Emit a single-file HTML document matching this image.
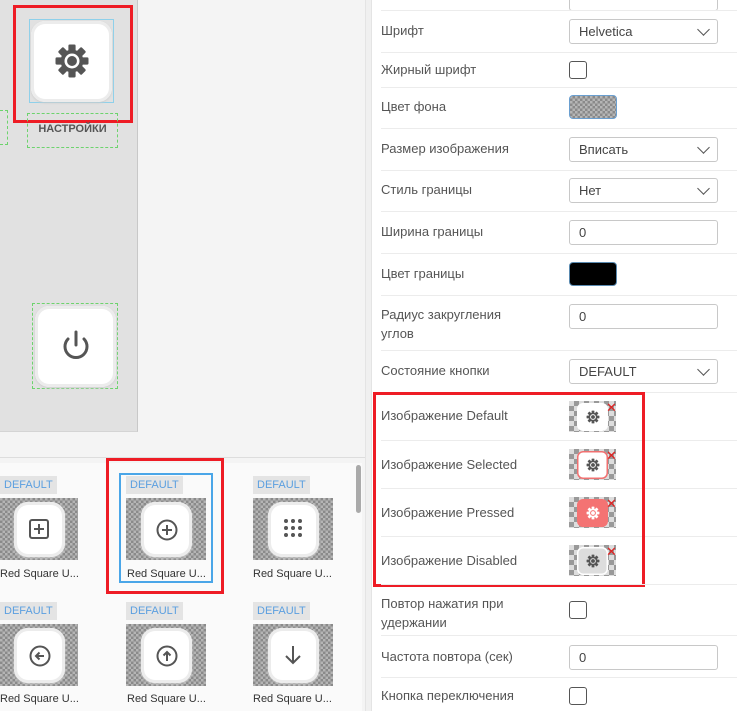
<!DOCTYPE html>
<html><head><meta charset="utf-8">
<style>
*{box-sizing:border-box;margin:0;padding:0}
body{width:737px;height:711px;overflow:hidden;position:relative;background:#f4f4f4;font-family:"Liberation Sans","DejaVu Sans",sans-serif;color:#555}
.a{position:absolute}
.chk{background:repeating-conic-gradient(#8a8a8a 0 25%,#b5b5b5 0 50%) 0 0/5px 5px}
.chk2{background:repeating-conic-gradient(#999 0 25%,#ddd 0 50%) 0 0/10px 10px}
.btn{position:absolute;background:#fff;border-radius:14px;box-shadow:inset 0 0 0 3px #ececec,0 1px 2px #ccc}
.lbl{position:absolute;left:381px;font-size:13px;color:#555;line-height:19px}
.inp{position:absolute;left:569px;width:149px;height:25px;border:1px solid #c8c8c8;border-radius:3px;background:#fff;font-size:13px;padding-left:9px;line-height:23px;color:#444}
.sel::after{content:"";position:absolute;right:9px;top:5px;width:8px;height:8px;border-right:1.5px solid #555;border-bottom:1.5px solid #555;transform:rotate(45deg)}
.cb{position:absolute;left:569px;width:18px;height:18px;border:1.5px solid #555;border-radius:3px;background:#fff}
.hr{position:absolute;left:381px;width:356px;height:1px;background:#ececec}
.tag{position:absolute;height:18px;background:#e4e4e4;color:#5b9fe0;font-size:11px;line-height:18px;padding:0 4px}
.cap{position:absolute;font-size:11px;color:#333;white-space:nowrap}
.thumb{position:absolute;left:569px;width:47px;height:31px}
.thumb i{position:absolute;left:8px;top:2px;width:31px;height:28px;border-radius:6px;background:#fff;display:flex;align-items:center;justify-content:center}
.x{position:absolute;left:606px;color:#e02020;font-size:13px;font-weight:bold;line-height:12px}
</style></head><body>
<svg width="0" height="0" style="position:absolute">
<defs>
<g id="gear">
<g fill="currentColor">
<rect x="9.6" y="1" width="4.8" height="5" rx="0.8"/>
<rect x="9.6" y="1" width="4.8" height="5" rx="0.8" transform="rotate(45 12 12)"/>
<rect x="9.6" y="1" width="4.8" height="5" rx="0.8" transform="rotate(90 12 12)"/>
<rect x="9.6" y="1" width="4.8" height="5" rx="0.8" transform="rotate(135 12 12)"/>
<rect x="9.6" y="1" width="4.8" height="5" rx="0.8" transform="rotate(180 12 12)"/>
<rect x="9.6" y="1" width="4.8" height="5" rx="0.8" transform="rotate(225 12 12)"/>
<rect x="9.6" y="1" width="4.8" height="5" rx="0.8" transform="rotate(270 12 12)"/>
<rect x="9.6" y="1" width="4.8" height="5" rx="0.8" transform="rotate(315 12 12)"/>
<circle cx="12" cy="12" r="7.6"/>
</g>
<circle cx="12" cy="12" r="5" fill="var(--bg,#fff)"/>
<circle cx="12" cy="12" r="3.3" fill="currentColor"/>
</g>
</defs></svg>
<!-- canvas -->
<div class="a" style="left:0;top:0;width:138px;height:432px;background:#e1e1e1;border-right:1px solid #c8c8c8;border-bottom:1px solid #d4d4d4"></div>
<div class="a" style="left:29px;top:19px;width:85px;height:84px;border:1px solid #8ed0ea"></div>
<div class="btn" style="left:31px;top:21px;width:81px;height:81px"></div>
<svg class="a" style="left:54px;top:43px;color:#555" width="36" height="36" viewBox="0 0 24 24"><use href="#gear"/></svg>
<div class="a" style="left:13px;top:5px;width:120px;height:118px;border:3px solid #ee1c25"></div>
<div class="a" style="left:27px;top:113px;width:91px;height:35px;border:1px dashed #6dd36d"></div>
<div class="a" style="left:-10px;top:110px;width:18px;height:35px;border:1px dashed #6dd36d"></div>
<div class="a" style="left:27px;top:123px;width:91px;text-align:center;font-size:11px;font-weight:bold;color:#555">НАСТРОЙКИ</div>
<div class="a" style="left:32px;top:303px;width:86px;height:86px;border:1px dashed #6dd36d"></div>
<div class="btn" style="left:35px;top:306px;width:81px;height:81px"></div>
<svg class="a" style="left:58px;top:328px" width="36" height="36" viewBox="0 0 36 36"><path d="M18 4v13M10 11a11 11 0 1 0 16 0" fill="none" stroke="#555" stroke-width="3" stroke-linecap="round"/></svg>
<div class="a" style="left:365px;top:0;width:7px;height:711px;background:#f0f0f0;border-left:1px solid #e4e4e4;border-right:1px solid #e4e4e4"></div>
<!-- bottom library -->
<div class="a" style="left:0;top:457px;width:365px;height:1px;background:#ddd"></div>
<div class="a" style="left:0;top:463px;width:362px;height:248px;background:#fafafa"></div>
<div class="a" style="left:356px;top:465px;width:5px;height:48px;background:#aaa;border-radius:3px"></div>

<div class="tag" style="left:0;top:476px">DEFAULT</div>
<div class="a chk" style="left:0;top:498px;width:78px;height:62px"></div>
<div class="btn" style="left:14px;top:502px;width:51px;height:55px"></div>
<svg class="a" style="left:28px;top:518px" width="22" height="22" viewBox="0 0 22 22"><rect x="2" y="2" width="18" height="18" rx="2" fill="none" stroke="#555" stroke-width="2"/><path d="M11 6v10M6 11h10" stroke="#555" stroke-width="2"/></svg>
<div class="cap" style="left:0;top:568px">Red Square U...</div>

<div class="tag" style="left:126px;top:476px">DEFAULT</div>
<div class="a chk" style="left:126px;top:498px;width:80px;height:62px"></div>
<div class="btn" style="left:141px;top:502px;width:51px;height:55px"></div>
<svg class="a" style="left:155px;top:518px" width="24" height="24" viewBox="0 0 24 24"><circle cx="12" cy="12" r="9.5" fill="none" stroke="#555" stroke-width="2"/><path d="M12 7v10M7 12h10" stroke="#555" stroke-width="2"/></svg>
<div class="cap" style="left:127px;top:568px">Red Square U...</div>
<div class="a" style="left:119px;top:473px;width:94px;height:110px;border:2px solid #4aa6e8"></div>
<div class="a" style="left:106px;top:458px;width:118px;height:136px;border:3px solid #ee1c25"></div>

<div class="tag" style="left:253px;top:476px">DEFAULT</div>
<div class="a chk" style="left:253px;top:498px;width:80px;height:62px"></div>
<div class="btn" style="left:268px;top:502px;width:51px;height:55px"></div>
<svg class="a" style="left:283px;top:518px" width="20" height="20" viewBox="0 0 20 20" fill="#555"><circle cx="3" cy="3" r="2"/><circle cx="10" cy="3" r="2"/><circle cx="17" cy="3" r="2"/><circle cx="3" cy="10" r="2"/><circle cx="10" cy="10" r="2"/><circle cx="17" cy="10" r="2"/><circle cx="3" cy="17" r="2"/><circle cx="10" cy="17" r="2"/><circle cx="17" cy="17" r="2"/></svg>
<div class="cap" style="left:253px;top:568px">Red Square U...</div>

<div class="tag" style="left:0;top:602px">DEFAULT</div>
<div class="a chk" style="left:0;top:624px;width:78px;height:62px"></div>
<div class="btn" style="left:14px;top:628px;width:51px;height:55px"></div>
<svg class="a" style="left:28px;top:644px" width="24" height="24" viewBox="0 0 24 24"><circle cx="12" cy="12" r="9.5" fill="none" stroke="#555" stroke-width="2"/><path d="M16 12H8M11.5 8.5L8 12l3.5 3.5" fill="none" stroke="#555" stroke-width="2"/></svg>
<div class="cap" style="left:0;top:693px">Red Square U...</div>

<div class="tag" style="left:126px;top:602px">DEFAULT</div>
<div class="a chk" style="left:126px;top:624px;width:80px;height:62px"></div>
<div class="btn" style="left:141px;top:628px;width:51px;height:55px"></div>
<svg class="a" style="left:155px;top:644px" width="24" height="24" viewBox="0 0 24 24"><circle cx="12" cy="12" r="9.5" fill="none" stroke="#555" stroke-width="2"/><path d="M12 17V8M8.5 11.5L12 8l3.5 3.5" fill="none" stroke="#555" stroke-width="2"/></svg>
<div class="cap" style="left:127px;top:693px">Red Square U...</div>

<div class="tag" style="left:253px;top:602px">DEFAULT</div>
<div class="a chk" style="left:253px;top:624px;width:80px;height:62px"></div>
<div class="btn" style="left:268px;top:628px;width:51px;height:55px"></div>
<svg class="a" style="left:282px;top:644px" width="22" height="22" viewBox="0 0 22 22"><path d="M11 2v17M4 12l7 7 7-7" fill="none" stroke="#555" stroke-width="2"/></svg>
<div class="cap" style="left:253px;top:693px">Red Square U...</div>

<!-- right panel -->
<div class="a" style="left:372px;top:0;width:365px;height:711px;background:#fff"></div>
<div class="inp" style="top:-14px"></div>
<div class="hr" style="top:10px"></div>
<div class="lbl" style="top:21px">Шрифт</div><div class="inp sel" style="top:19px">Helvetica</div>
<div class="hr" style="top:52px"></div>
<div class="lbl" style="top:60px">Жирный шрифт</div><div class="cb" style="top:61px"></div>
<div class="hr" style="top:87px"></div>
<div class="lbl" style="top:97px">Цвет фона</div><div class="a chk" style="left:569px;top:95px;width:48px;height:24px;border:1px solid #6a9fd0;border-radius:4px"></div>
<div class="hr" style="top:128px"></div>
<div class="lbl" style="top:139px">Размер изображения</div><div class="inp sel" style="top:137px">Вписать</div>
<div class="hr" style="top:170px"></div>
<div class="lbl" style="top:180px">Стиль границы</div><div class="inp sel" style="top:178px">Нет</div>
<div class="hr" style="top:211px"></div>
<div class="lbl" style="top:222px">Ширина границы</div><div class="inp" style="top:220px">0</div>
<div class="hr" style="top:253px"></div>
<div class="lbl" style="top:264px">Цвет границы</div><div class="a" style="left:569px;top:262px;width:48px;height:24px;background:#000;border:1px solid #5a8ab0;border-radius:4px"></div>
<div class="hr" style="top:295px"></div>
<div class="lbl" style="top:305px">Радиус закругления<br>углов</div><div class="inp" style="top:304px">0</div>
<div class="hr" style="top:350px"></div>
<div class="lbl" style="top:361px">Состояние кнопки</div><div class="inp sel" style="top:359px">DEFAULT</div>
<div class="hr" style="top:392px"></div>

<div class="lbl" style="top:406px">Изображение Default</div>
<div class="thumb chk2" style="top:401px"><i><svg width="14" height="14" viewBox="0 0 24 24" style="color:#555"><use href="#gear"/></svg></i></div><div class="x" style="top:402px">✕</div>
<div class="hr" style="top:440px"></div>
<div class="lbl" style="top:455px">Изображение Selected</div>
<div class="thumb chk2" style="top:449px"><i style="box-shadow:inset 0 0 0 1.5px #f07070"><svg width="14" height="14" viewBox="0 0 24 24" style="color:#555"><use href="#gear"/></svg></i></div><div class="x" style="top:450px">✕</div>
<div class="hr" style="top:488px"></div>
<div class="lbl" style="top:503px">Изображение Pressed</div>
<div class="thumb chk2" style="top:497px"><i style="background:#f47373"><svg width="14" height="14" viewBox="0 0 24 24" style="color:#fff;--bg:#f47373"><use href="#gear"/></svg></i></div><div class="x" style="top:498px">✕</div>
<div class="hr" style="top:536px"></div>
<div class="lbl" style="top:551px">Изображение Disabled</div>
<div class="thumb chk2" style="top:545px"><i style="background:#ddd;box-shadow:inset 0 0 0 1.5px #fff"><svg width="14" height="14" viewBox="0 0 24 24" style="color:#555;--bg:#ddd"><use href="#gear"/></svg></i></div><div class="x" style="top:546px">✕</div>
<div class="a" style="left:373px;top:392px;width:272px;height:195px;border:3px solid #ee1c25"></div>
<div class="hr" style="top:584px"></div>
<div class="lbl" style="top:594px">Повтор нажатия при<br>удержании</div><div class="cb" style="top:601px"></div>
<div class="hr" style="top:635px"></div>
<div class="lbl" style="top:647px">Частота повтора (сек)</div><div class="inp" style="top:645px">0</div>
<div class="hr" style="top:677px"></div>
<div class="lbl" style="top:686px">Кнопка переключения</div><div class="cb" style="top:687px"></div>
</body></html>
